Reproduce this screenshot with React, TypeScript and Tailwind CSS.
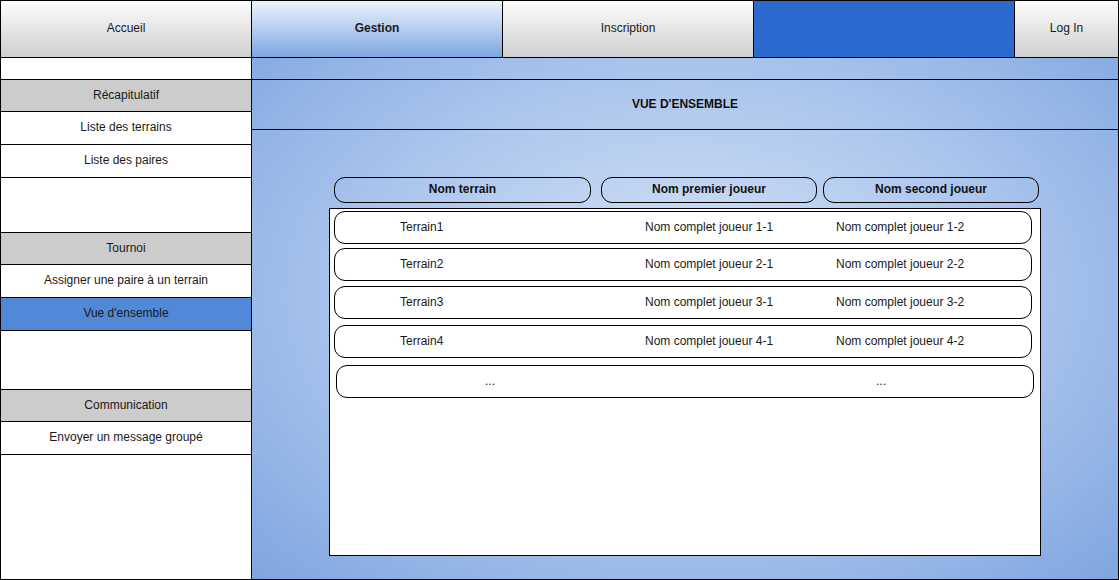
const topTabs = [
  { label: "Accueil", w: "w-[251px]", kind: "gray" },
  { label: "Gestion", w: "w-[251px]", kind: "active" },
  { label: "Inscription", w: "w-[251px]", kind: "gray" },
  { label: "", w: "w-[261px]", kind: "blue" },
  { label: "Log In", w: "w-[103px]", kind: "last" },
];

const rows = [
  ["Terrain1", "Nom complet joueur 1-1", "Nom complet joueur 1-2", "mt-[2px]"],
  ["Terrain2", "Nom complet joueur 2-1", "Nom complet joueur 2-2", "mt-[4px]"],
  ["Terrain3", "Nom complet joueur 3-1", "Nom complet joueur 3-2", "mt-[5px]"],
  ["Terrain4", "Nom complet joueur 4-1", "Nom complet joueur 4-2", "mt-[6px]"],
];

function SideItem({
  label,
  h,
  tone = "white",
  last = false,
}: {
  label?: string;
  h?: string;
  tone?: "white" | "gray" | "blue";
  last?: boolean;
}) {
  const bg =
    tone === "gray" ? "bg-[#cccccc]" : tone === "blue" ? "bg-[#5288d8]" : "bg-white";
  return (
    <div
      className={`${last ? "flex-1" : `${h} border-b border-black`} ${bg} flex items-center justify-center pb-[2px] text-[12px] text-[#1a1a1a]`}
    >
      {label}
    </div>
  );
}

export default function App() {
  return (
    <div
      className="w-[1119px] h-[580px] flex flex-col bg-white text-black"
      style={{ fontFamily: '"Liberation Sans", Arial, sans-serif' }}
    >
      {/* top navigation */}
      <div className="h-[58px] flex border border-black shrink-0">
        {topTabs.map((t) => (
          <div
            key={t.w + t.label + t.kind}
            className={`${t.w} ${t.kind === "last" ? "" : "border-r border-black"} flex items-center justify-center pb-[2px] text-[12px] ${
              t.kind === "active"
                ? "bg-gradient-to-b from-[#eef4fc] to-[#7ea6e0] font-bold"
                : t.kind === "blue"
                  ? "bg-[#2b6bcf]"
                  : "bg-gradient-to-b from-[#fdfdfd] to-[#cfcfcf]"
            } text-[#1a1a1a]`}
          >
            {t.label}
          </div>
        ))}
      </div>

      <div className="flex h-[522px] border-b border-black">
        {/* sidebar */}
        <div className="w-[252px] flex flex-col border-l border-r border-black">
          <SideItem h="h-[22px]" />
          <SideItem label="Récapitulatif" h="h-[32px]" tone="gray" />
          <SideItem label="Liste des terrains" h="h-[33px]" />
          <SideItem label="Liste des paires" h="h-[33px]" />
          <SideItem h="h-[55px]" />
          <SideItem label="Tournoi" h="h-[32px]" tone="gray" />
          <SideItem label="Assigner une paire à un terrain" h="h-[33px]" />
          <SideItem label="Vue d'ensemble" h="h-[33px]" tone="blue" />
          <SideItem h="h-[59px]" />
          <SideItem label="Communication" h="h-[32px]" tone="gray" />
          <SideItem label="Envoyer un message groupé" h="h-[33px]" />
          <SideItem last />
        </div>

        {/* main area */}
        <div className="w-[867px] flex flex-col border-r border-black bg-[radial-gradient(ellipse_farthest-corner_at_50%_45%,#d6e4f7_0%,#aac4ec_55%,#7ea6e0_100%)]">
          <div className="h-[21px]" />
          <div className="h-[51px] border-y border-black flex items-center justify-center pb-[2px] text-[12px] font-bold text-[#111]">
            VUE D'ENSEMBLE
          </div>

          <div className="mt-[47px] mx-[77px] flex flex-col">
            <div className="flex h-[26px] text-[12px] font-bold text-[#111]">
              <div className="ml-[5px] w-[257px] rounded-[11px] border border-black flex items-center justify-center pb-[2px]">
                Nom terrain
              </div>
              <div className="ml-[10px] w-[216px] rounded-[11px] border border-black flex items-center justify-center pb-[2px]">
                Nom premier joueur
              </div>
              <div className="ml-[6px] w-[216px] rounded-[11px] border border-black flex items-center justify-center pb-[2px]">
                Nom second joueur
              </div>
            </div>

            <div className="mt-[5px] h-[348px] bg-white border border-black flex flex-col text-[12px] text-[#1a1a1a]">
              {rows.map(([a, b, c, mt]) => (
                <div
                  key={a}
                  className={`${mt} ml-[4px] w-[698px] h-[33px] rounded-[11px] border border-black flex items-center pb-[2px]`}
                >
                  <span className="w-[310px] pl-[65px]">{a}</span>
                  <span className="w-[191px]">{b}</span>
                  <span>{c}</span>
                </div>
              ))}
              <div className="mt-[7px] ml-[6px] w-[698px] h-[33px] rounded-[11px] border border-black flex items-center pb-[2px]">
                <span className="ml-[148px]">...</span>
                <span className="ml-[381px]">...</span>
              </div>
            </div>
          </div>
        </div>
      </div>
    </div>
  );
}
